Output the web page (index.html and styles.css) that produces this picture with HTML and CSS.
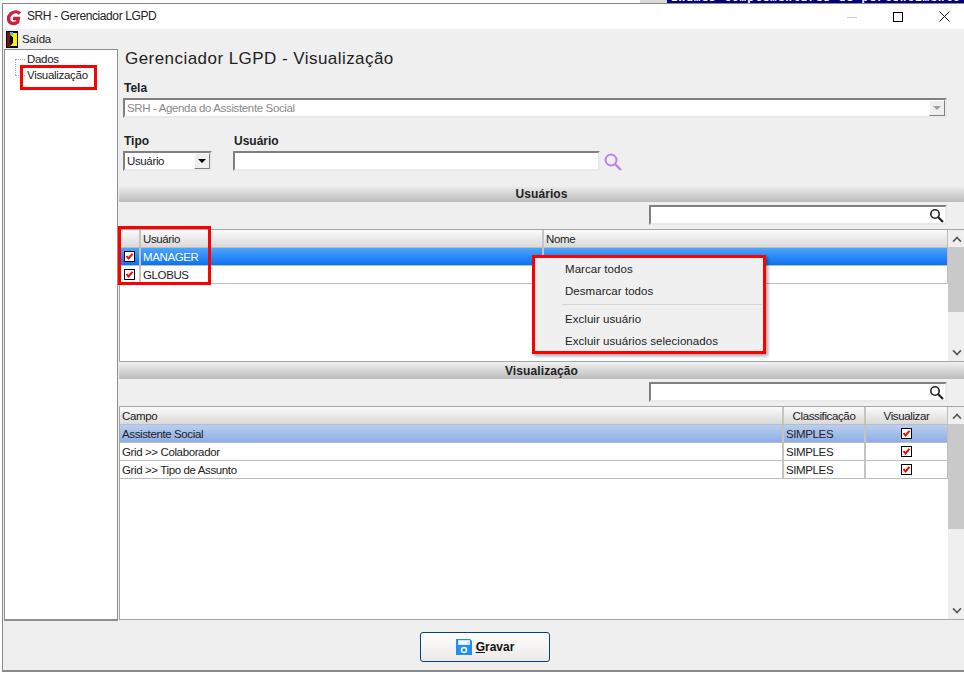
FILE: index.html
```html
<!DOCTYPE html>
<html lang="pt">
<head>
<meta charset="utf-8">
<title>SRH - Gerenciador LGPD</title>
<link rel="stylesheet" href="styles.css">
</head>
<body>
<div class="desktop-strip"><div class="strip-gray"></div><div class="strip-navy"><span>Exames complementares de pertencimento</span></div></div>
<div class="window">
  <header class="titlebar">
    <svg class="logo" width="18" height="18" viewBox="0 0 18 18"><path d="M15 4.500C12.500 2.300 8.500 2.300 5.800 4.800 2.700 7.700 2.800 12.800 6.500 14.200 9 15 11.300 14.200 12.600 13.200L13.300 9.500H8" fill="none" stroke="#c8243c" stroke-width="3.400"/></svg>
    <span class="title">SRH - Gerenciador LGPD</span>
    <div class="controls">
      <span class="ctl"><svg width="10" height="10" viewBox="0 0 10 10"><path d="M0 5.500H10" stroke="#c8c8c8"/></svg></span>
      <span class="ctl ctl-max"><svg width="10" height="10" viewBox="0 0 10 10"><rect x=".5" y=".5" width="9" height="9" fill="none" stroke="#000"/></svg></span>
      <span class="ctl ctl-close"><svg width="11" height="11" viewBox="0 0 11 11"><path d="M.5.500L10.500 10.500M10.500.500L.5 10.500" stroke="#111"/></svg></span>
    </div>
  </header>
  <nav class="menubar">
    <svg class="door" width="12" height="17" viewBox="0 0 12 17"><rect width="12" height="17" fill="#000"/><rect x="1" y="1" width="3" height="15" fill="#7a1010"/><path d="M4 2H11V15H4L7 12V6L4 4Z" fill="#ffee00"/><rect x="4" y="1" width="3" height="3" fill="#38c8d8"/></svg>
    <span>Saída</span>
  </nav>
  <div class="body">
    <aside class="tree">
      <div class="tree-item first">Dados</div>
      <div class="tree-item">Visualização</div>
    </aside>
    <main class="content">
      <h1 class="heading">Gerenciador LGPD - Visualização</h1>
      <div class="form">
        <label class="lbl">Tela</label>
        <div class="combo wide disabled"><span>SRH - Agenda do Assistente Social</span><i class="arrow-btn"><b></b></i></div>
        <div class="row-fields">
          <div class="field">
            <label class="lbl">Tipo</label>
            <div class="combo tipo"><span>Usuário</span><i class="arrow-btn"><b></b></i></div>
          </div>
          <div class="field">
            <label class="lbl">Usuário</label>
            <div class="user-line">
              <div class="input user"></div>
              <svg class="user-search" width="20" height="20" viewBox="0 0 20 20"><circle cx="8" cy="8" r="5.500" fill="none" stroke="#c17ff0" stroke-width="2"/><path d="M12 12L18 18" stroke="#c17ff0" stroke-width="2.400"/></svg>
            </div>
          </div>
        </div>
      </div>

      <div class="section-head">Usuários</div>
      <div class="search-row">
        <div class="input search"><svg width="15" height="15" viewBox="0 0 15 15"><circle cx="6" cy="6" r="4.200" fill="none" stroke="#222" stroke-width="1.600"/><path d="M9 9L14 14" stroke="#222" stroke-width="2.200"/></svg></div>
      </div>
      <div class="grid-wrap users">
        <div class="grid">
          <div class="g-row g-head"><div class="c c-check"></div><div class="c c-user">Usuário</div><div class="c c-fill">Nome</div></div>
          <div class="g-row sel-blue"><div class="c c-check"><svg class="chk" viewBox="0 0 11 11"><rect x=".5" y=".5" width="10" height="10" fill="#fff" stroke="#000"/><path d="M2.500 5L4.500 7.500L8.500 2.800" fill="none" stroke="#f00" stroke-width="2"/></svg></div><div class="c c-user">MANAGER</div><div class="c c-fill"></div></div>
          <div class="g-row"><div class="c c-check"><svg class="chk" viewBox="0 0 11 11"><rect x=".5" y=".5" width="10" height="10" fill="#fff" stroke="#000"/><path d="M2.500 5L4.500 7.500L8.500 2.800" fill="none" stroke="#f00" stroke-width="2"/></svg></div><div class="c c-user">GLOBUS</div><div class="c c-fill"></div></div>
        </div>
        <div class="scroll"><span class="up"></span><div class="track"><div class="thumb t1"></div></div><span class="down"></span></div>
      </div>

      <div class="section-head">Visualização</div>
      <div class="search-row">
        <div class="input search"><svg width="15" height="15" viewBox="0 0 15 15"><circle cx="6" cy="6" r="4.200" fill="none" stroke="#222" stroke-width="1.600"/><path d="M9 9L14 14" stroke="#222" stroke-width="2.200"/></svg></div>
      </div>
      <div class="grid-wrap fields">
        <div class="grid">
          <div class="g-row g-head"><div class="c c-fill">Campo</div><div class="c c-class center">Classificação</div><div class="c c-vis center">Visualizar</div></div>
          <div class="g-row sel-pale"><div class="c c-fill">Assistente Social</div><div class="c c-class">SIMPLES</div><div class="c c-vis center"><svg class="chk" viewBox="0 0 11 11"><rect x=".5" y=".5" width="10" height="10" fill="#fff" stroke="#000"/><path d="M2.500 5L4.500 7.500L8.500 2.800" fill="none" stroke="#f00" stroke-width="2"/></svg></div></div>
          <div class="g-row"><div class="c c-fill">Grid &gt;&gt; Colaborador</div><div class="c c-class">SIMPLES</div><div class="c c-vis center"><svg class="chk" viewBox="0 0 11 11"><rect x=".5" y=".5" width="10" height="10" fill="#fff" stroke="#000"/><path d="M2.500 5L4.500 7.500L8.500 2.800" fill="none" stroke="#f00" stroke-width="2"/></svg></div></div>
          <div class="g-row"><div class="c c-fill">Grid &gt;&gt; Tipo de Assunto</div><div class="c c-class">SIMPLES</div><div class="c c-vis center"><svg class="chk" viewBox="0 0 11 11"><rect x=".5" y=".5" width="10" height="10" fill="#fff" stroke="#000"/><path d="M2.500 5L4.500 7.500L8.500 2.800" fill="none" stroke="#f00" stroke-width="2"/></svg></div></div>
        </div>
        <div class="scroll"><span class="up"></span><div class="track"><div class="thumb t2"></div></div><span class="down"></span></div>
      </div>
    </main>
  </div>
  <footer class="footer">
    <button class="save" type="button">
      <svg width="16" height="16" viewBox="0 0 16 16"><path d="M0 0H14L16 2V16H0Z" fill="#1e90f5"/><rect x="2" y="1" width="12" height="5" fill="#cfe6fa"/><rect x="3" y="2" width="8" height="3" fill="#fff"/><circle cx="8" cy="11" r="2.500" fill="none" stroke="#fff" stroke-width="1.500"/></svg>
      <span><u>G</u>ravar</span>
    </button>
  </footer>
</div>

<div class="mark mark-tree"></div>
<div class="mark mark-users"></div>
<div class="popup">
  <div class="pop-item">Marcar todos</div>
  <div class="pop-item">Desmarcar todos</div>
  <div class="pop-sep"></div>
  <div class="pop-item">Excluir usuário</div>
  <div class="pop-item">Excluir usuários selecionados</div>
</div>
</body>
</html>
```
FILE: styles.css
```css
* { box-sizing: border-box; }
html, body { margin: 0; padding: 0; }
body {
  width: 964px; height: 673px; overflow: hidden; background: #fff; position: relative;
  font: 11px "Liberation Sans", Arial, sans-serif; color: #111;
}
.desktop-strip { height: 3px; display: flex; justify-content: flex-end; overflow: hidden; }
.strip-gray { width: 27px; background: #d8d8d8; }
.strip-navy { width: 297px; background: #000080; color: #fff; font: bold 11px "DejaVu Sans Mono", monospace; letter-spacing: 1px; white-space: nowrap; overflow: hidden; padding-left: 4px; line-height: 3px; }
.strip-navy span { display: block; margin-top: -4px; }
.window {
  margin-left: 2px; height: 669px; display: flex; flex-direction: column;
  border-top: 1px solid #8a8a8a; border-left: 1px solid #8a8a8a; border-bottom: 2px solid #8a8a8a;
  background: #efefef;
}
.titlebar { height: 25px; flex: none; background: #fff; display: flex; align-items: center; padding-left: 2px; }
.logo { margin-right: 3px; margin-top: 3px; }
.title { font-size: 12px; color: #222; letter-spacing: -.4px; margin-top: -1px; margin-left: 1px; }
.controls { margin-left: auto; display: flex; height: 100%; }
.ctl { width: 46px; display: flex; align-items: center; justify-content: center; }
.ctl-max { margin-right: 3px; }
.ctl-close { width: 40px; }
.menubar { height: 20px; flex: none; background: #f0f0f0; display: flex; align-items: center; padding-left: 3px; gap: 4px; font-size: 11.500px; letter-spacing: -.2px; color: #222; }
.door { display: block; }
.body { flex: none; height: 572px; display: flex; padding-left: 1px; }
.tree { width: 114px; flex: none; height: 572px; background: #fff; border: 1px solid #8e8e8e; border-bottom-width: 2px; padding: 1px 0 0 22px; position: relative; }
.tree-item { height: 16px; line-height: 16px; position: relative; font-size: 11.500px; letter-spacing: -.3px; color: #222; }
.tree-item::before { content: ""; position: absolute; left: -12px; top: 8px; width: 10px; border-top: 1px dotted #aaa; }
.tree-item.first::after { content: ""; position: absolute; left: -12px; top: 8px; height: 16px; border-left: 1px dotted #aaa; }
.content { width: 845px; margin-left: 1px; flex: none; display: flex; flex-direction: column; }
.heading { margin: 0; height: 32px; padding: 0 0 0 6px; font: normal 17px/20px "Liberation Sans", sans-serif; letter-spacing: .45px; color: #222; }
.form { padding: 0 0 0 4px; height: 104px; }
.lbl { display: block; font-weight: bold; font-size: 12px; line-height: 14px; height: 14px; color: #222; padding-left: 1px; }
.combo, .input { background: #fff; border: 2px solid; border-color: #808080 #e9e9e9 #e9e9e9 #808080; height: 20px; }
.combo { display: flex; align-items: center; padding-left: 2px; font-size: 11.500px; letter-spacing: -.36px; position: relative; margin-top: 3px; }
.wide { width: 824px; }
.disabled { color: #8a8a8a; }
.arrow-btn { position: absolute; right: 0; top: 0; bottom: 0; width: 16px; background: #efefef; border: 1px solid; border-color: #fff #808080 #808080 #fff; display: flex; align-items: center; justify-content: center; }
.arrow-btn b { width: 0; height: 0; border: 4px solid transparent; border-top-color: #000; border-bottom-width: 0; }
.disabled .arrow-btn b { border-top-color: #a0a0a0; }
.row-fields { display: flex; gap: 21px; margin-top: 16px; }
.user-line { margin-top: 3px; display: flex; align-items: flex-start; gap: 3px; }
.tipo { width: 89px; color: #222; }
.input.user { width: 367px; }
.user-search { margin-top: 1px; }
.section-head { height: 17px; flex: none; padding-top: 1px; background: linear-gradient(#f0f0f0, #bcbcbc); text-align: center; font-weight: bold; font-size: 12px; line-height: 17px; color: #222; letter-spacing: .1px; }
.search-row { height: 27px; flex: none; padding: 3px 17px 0 0; display: flex; justify-content: flex-end; }
.input.search { width: 298px; height: 20px; display: flex; align-items: center; justify-content: flex-end; padding-right: 1px; }
.grid-wrap { display: flex; flex: none; border-top: 1px solid #a6a6a6; border-bottom: 1px solid #a6a6a6; }
.grid-wrap.users { height: 133px; }
.grid-wrap.fields { height: 214px; }
.grid { width: 829px; flex: none; background: #fff; border-left: 1px solid #a6a6a6; }
.g-row { display: flex; height: 18px; border-bottom: 1px solid #bdbdbd; border-right: 1px solid #bdbdbd; font-size: 11.500px; letter-spacing: -.38px; color: #222; }
.c { border-right: 2px solid #c4c4c4; padding: 1px 2px 0; line-height: 17px; white-space: nowrap; overflow: hidden; }
.c:last-child { border-right: 0; }
.c-check { width: 21px; flex: none; display: flex; align-items: center; justify-content: center; padding: 0; }
.c-user { width: 403px; flex: none; }
.c-fill { flex: 1; }
.c-class { width: 82px; flex: none; }
.c-vis { width: 81px; flex: none; }
.center { text-align: center; }
.chk { width: 11px; height: 11px; display: block; margin: 2px auto 0; }
.c-check .chk { margin: 0; }
.g-head { background: linear-gradient(#fbfbfb, #d9d9d9); }
.sel-blue { background: linear-gradient(#4ea4fb, #0a72f4); color: #fff; }
.sel-pale { background: linear-gradient(#b8cff1, #8eaee6); }
.scroll { flex: 1; display: flex; flex-direction: column; background: #efefef; align-items: stretch; }
.up, .down { height: 17px; flex: none; position: relative; }
.up::before, .down::before { content: ""; position: absolute; left: 5px; width: 6px; height: 6px; border: solid #555; border-width: 2px 0 0 2px; transform: rotate(45deg) scale(.8); top: 7px; }
.down::before { transform: rotate(225deg) scale(.8); top: 3px; }
.track { flex: 1; }
.thumb { background: #c9c9c9; }
.t1 { height: 65px; }
.t2 { height: 105px; }
.footer { flex: 1; display: flex; align-items: center; justify-content: center; padding: 3px 0 0 3px; }
.save { width: 130px; height: 30px; display: flex; align-items: center; justify-content: center; gap: 4px; border: 1px solid #0a3f78; border-radius: 3px; background: linear-gradient(#fff, #ece9e6); font: bold 12px "Liberation Sans", sans-serif; color: #111; padding: 0; }
.mark { position: absolute; border: 3px solid #f00; }
.mark-tree { left: 20px; top: 65px; width: 77px; height: 25px; }
.mark-users { left: 118px; top: 226px; width: 93px; height: 59px; }
.popup { position: absolute; left: 532px; top: 255px; width: 234px; height: 99px; background: #f0f0f0; border: 3px solid #f00; box-shadow: 2px 2px 3px rgba(0,0,0,.35); font-size: 11.500px; letter-spacing: .05px; color: #222; }
.pop-item { height: 22px; line-height: 22px; padding-left: 30px; }
.pop-sep { height: 1px; background: #d5d5d5; margin: 2px 1px 3px 27px; }
```
